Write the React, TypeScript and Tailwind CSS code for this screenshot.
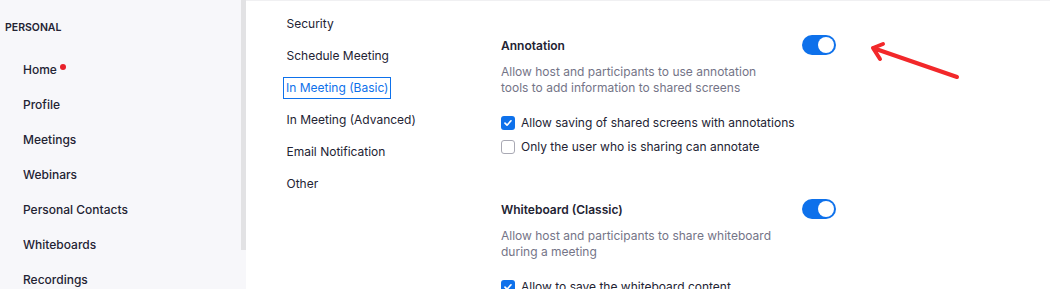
import { FC } from 'react';

const navItems = [
  'Home',
  'Profile',
  'Meetings',
  'Webinars',
  'Personal Contacts',
  'Whiteboards',
  'Recordings',
];

const tabs = [
  'Security',
  'Schedule Meeting',
  'In Meeting (Basic)',
  'In Meeting (Advanced)',
  'Email Notification',
  'Other',
];

const Toggle: FC = () => (
  <div className="flex h-5 w-[34px] items-center justify-end rounded-full bg-[#0e71eb] pr-[2px]">
    <div className="h-4 w-4 rounded-full bg-white" />
  </div>
);

const Checkbox: FC<{ checked?: boolean; label: string }> = ({ checked, label }) => (
  <div className="flex h-6 items-center gap-[6px]">
    {checked ? (
      <div className="flex h-[14px] w-[14px] items-center justify-center rounded-[3px] bg-[#0e71eb]">
        <svg width="10" height="10" viewBox="0 0 10 10" fill="none">
          <path d="M2 5.2l2 2 4-4.4" stroke="white" strokeWidth="1.7" strokeLinecap="round" strokeLinejoin="round" />
        </svg>
      </div>
    ) : (
      <div className="h-[14px] w-[14px] rounded-[3px] border border-[#a9a9b4] bg-white" />
    )}
    <span className="text-[12px] text-[#232333]">{label}</span>
  </div>
);

const Setting: FC<{ title: string; desc: string[]; options: { label: string; checked?: boolean }[] }> = ({
  title,
  desc,
  options,
}) => (
  <div>
    <div className="flex h-5 items-center justify-between">
      <span className="pt-[2px] text-[12px] font-semibold text-[#232333]">{title}</span>
      <Toggle />
    </div>
    <div className="mt-[9px] text-[12px] leading-4 text-[#747487]">
      {desc.map((d) => (
        <div key={d}>{d}</div>
      ))}
    </div>
    <div className="mt-[15px]">
      {options.map((o) => (
        <Checkbox key={o.label} label={o.label} checked={o.checked} />
      ))}
    </div>
  </div>
);

export default function App() {
  return (
    <div className="relative flex h-[289px] w-[1050px] overflow-hidden bg-white font-['Inter',sans-serif]">
      {/* Sidebar */}
      <div className="flex w-[246px] shrink-0 bg-[#f7f7fa]">
        <div className="flex-1">
          <div className="pl-[5px] pt-5 text-[10.5px] font-semibold leading-4 text-[#232333]">PERSONAL</div>
          <div className="mt-4">
            {navItems.map((item) => (
              <div key={item} className="flex h-[35px] items-center pl-[23px] text-[12px] font-medium text-[#232333]">
                {item}
                {item === 'Home' && <span className="mb-[6px] ml-[3px] h-[6px] w-[6px] rounded-full bg-[#e8202a]" />}
              </div>
            ))}
          </div>
        </div>
        <div className="h-[250px] w-[5px] bg-[#e2e2e4]" />
      </div>

      {/* Main */}
      <div className="flex flex-1 border-t border-[#f0f0f2]">
        <div className="w-[255px] pl-[37px] pt-[7px]">
          {tabs.map((tab) => (
            <div key={tab} className="flex h-8 items-center">
              {tab === 'In Meeting (Basic)' ? (
                <span className="border-[1.5px] border-[#0e71eb] px-[2px] py-[1px] text-[12px] text-[#0e71eb]">{tab}</span>
              ) : (
                <span className="pl-[3.5px] text-[12px] text-[#232333]">{tab}</span>
              )}
            </div>
          ))}
        </div>

        <div className="w-[335px] pt-[34px]">
          <Setting
            title="Annotation"
            desc={['Allow host and participants to use annotation', 'tools to add information to shared screens']}
            options={[
              { label: 'Allow saving of shared screens with annotations', checked: true },
              { label: 'Only the user who is sharing can annotate' },
            ]}
          />
          <div className="mt-10">
            <Setting
              title="Whiteboard (Classic)"
              desc={['Allow host and participants to share whiteboard', 'during a meeting']}
              options={[{ label: 'Allow to save the whiteboard content', checked: true }]}
            />
          </div>
        </div>
      </div>

      {/* Annotation arrow */}
      <svg className="absolute left-[866px] top-[38px]" width="100" height="50" viewBox="0 0 100 50" fill="none">
        <path
          d="M91 39L7 10M7 10L17 6M7 10L14 21"
          stroke="#f2282a"
          strokeWidth="4"
          strokeLinecap="round"
          strokeLinejoin="round"
        />
      </svg>
    </div>
  );
}
